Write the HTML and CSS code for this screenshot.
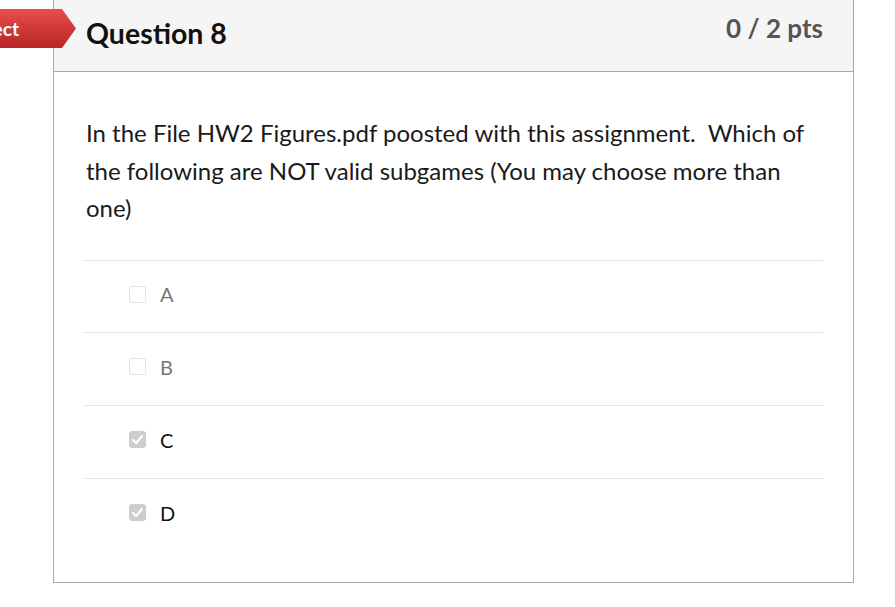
FILE: index.html
```html
<!DOCTYPE html>
<html lang="en">
<head>
    <meta charset="UTF-8">
    <meta name="viewport" content="width=device-width, initial-scale=1.0">
    <title>Question 8</title>
    <link rel="stylesheet" href="styles.css">
</head>
<body>
    <div class="page">
        <div class="result-flag">Incorrect</div>

        <div class="question">
            <div class="question-header">
                <h2 class="question-title">Question 8</h2>
                <span class="question-points">0 / 2 pts</span>
            </div>

            <div class="question-body">
                <p class="question-text">In the File HW2 Figures.pdf poosted with this assignment.&nbsp; Which of the following are NOT valid subgames (You may choose more than one)</p>

                <div class="answers">
                    <label class="answer">
                        <span class="box"></span>
                        <span class="answer-label muted">A</span>
                    </label>
                    <label class="answer">
                        <span class="box"></span>
                        <span class="answer-label muted">B</span>
                    </label>
                    <label class="answer">
                        <span class="box checked">
                            <svg viewBox="0 0 17 17" width="17" height="17"><path d="M4 9 L7.2 12 L13 5" fill="none" stroke="#fff" stroke-width="2.2" stroke-linecap="round" stroke-linejoin="round"/></svg>
                        </span>
                        <span class="answer-label">C</span>
                    </label>
                    <label class="answer">
                        <span class="box checked">
                            <svg viewBox="0 0 17 17" width="17" height="17"><path d="M4 9 L7.2 12 L13 5" fill="none" stroke="#fff" stroke-width="2.2" stroke-linecap="round" stroke-linejoin="round"/></svg>
                        </span>
                        <span class="answer-label">D</span>
                    </label>
                </div>
            </div>
        </div>
    </div>
</body>
</html>
```

FILE: styles.css
```css
body {
    margin: 0;
    padding: 0;
    background-color: #fff;
    font-family: Lato, "Open Sans", Arial, sans-serif;
    color: #222;
    overflow: hidden;
}

.page {
    position: relative;
    padding-left: 53px;
    height: 607px;
}

/* red "Incorrect" arrow, cut off by the left edge */
.result-flag {
    position: absolute;
    top: 10px;
    left: -80px;
    width: 156px;
    height: 39px;
    box-sizing: border-box;
    padding-right: 57px;
    text-align: right;
    line-height: 39px;
    font-size: 19px;
    font-weight: 700;
    color: #fff;
    background: linear-gradient(#e84d4d, #b82626);
    clip-path: polygon(0 0, calc(100% - 14px) 0, 100% 50%, calc(100% - 14px) 100%, 0 100%);
    z-index: 2;
}

.question {
    width: 801px;
    height: 584px;
    margin-top: -1px;
    box-sizing: border-box;
    border: 1px solid #a8a8a8;
    background-color: #fff;
}

.question-header {
    display: flex;
    justify-content: space-between;
    align-items: flex-start;
    height: 71px;
    padding: 0 30px 0 32px;
    background-color: #f5f5f5;
    border-bottom: 1px solid #a8a8a8;
}

.question-title {
    margin: 16px 0 0;
    font-size: 28.5px;
    font-weight: 700;
    color: #111;
}

.question-points {
    margin-top: 12px;
    font-size: 26px;
    font-weight: 700;
    color: #555;
}

.question-body {
    padding: 0 30px;
}

.question-text {
    margin: 42px 0 33px;
    padding-left: 2px;
    font-size: 24px;
    line-height: 37.5px;
    color: #1a1a1a;
}

.answer {
    display: flex;
    align-items: center;
    height: 72px;
    padding: 0 0 4px 45px;
    box-sizing: border-box;
    border-top: 1px solid #e3e3e3;
}

.answer + .answer {
    height: 73px;
}

.box {
    width: 17px;
    height: 17px;
    box-sizing: border-box;
    border: 1px solid #e2e2e2;
    border-radius: 3px;
    background-color: #fff;
}

.box.checked {
    border-color: #cdcdcd;
    background-color: #cdcdcd;
}

.box.checked svg {
    display: block;
    margin: -1px;
}

.answer-label {
    margin-left: 14px;
    font-size: 20px;
    color: #111;
}

.answer-label.muted {
    color: #777;
}
```
